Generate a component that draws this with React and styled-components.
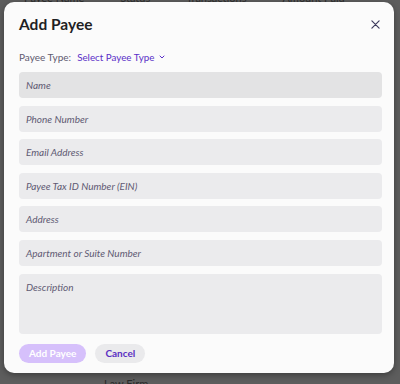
import styled, { createGlobalStyle } from 'styled-components';

const GlobalStyle = createGlobalStyle`
  html, body {
    margin: 0;
    padding: 0;
    background: #5d5d5d;
    font-family: Lato, 'Open Sans', sans-serif;
  }
`;

const Page = styled.div`
  position: relative;
  width: 400px;
  height: 384px;
  overflow: hidden;
  background: #5d5d5d;
`;

const BehindHeader = styled.div`
  display: flex;
  gap: 36px;
  padding: 0 0 0 24px;
  margin-top: -9px;
  font-size: 11px;
  color: #2e2e2e;
`;

const BehindCell = styled.div`
  position: absolute;
  left: 104px;
  top: 377px;
  font-size: 11px;
  color: #2a2a2a;
`;

const Modal = styled.div`
  position: absolute;
  left: 4px;
  top: 2px;
  width: 390px;
  height: 371px;
  box-sizing: border-box;
  background: #fbfbfb;
  border-radius: 10px;
  box-shadow: 0 2px 6px rgba(0, 0, 0, 0.35);
  padding: 11px 12px 0 15px;
  display: flex;
  flex-direction: column;
`;

const Header = styled.div`
  display: flex;
  align-items: center;
  justify-content: space-between;
  height: 22px;
`;

const Title = styled.h2`
  margin: 0;
  font-size: 15.5px;
  font-weight: 700;
  color: #1f1f24;
`;

const CloseButton = styled.button`
  border: 0;
  background: none;
  padding: 0;
  width: 14px;
  height: 14px;
  display: flex;
  align-items: center;
  justify-content: center;
  color: #3d3b5c;
`;

const TypeRow = styled.div`
  display: flex;
  align-items: center;
  margin-top: 16px;
  font-size: 10px;
  color: #5e5a70;
  gap: 6px;
`;

const TypeSelect = styled.span`
  display: flex;
  align-items: center;
  gap: 5px;
  color: #5a30c8;
  font-size: 9.8px;
`;

const Fields = styled.div`
  display: flex;
  flex-direction: column;
  gap: 7.6px;
  margin-top: 9px;
  width: 363px;
`;

const Field = styled.div`
  height: ${(p) => (p.$tall ? '60px' : '26px')};
  flex-shrink: 0;
  box-sizing: border-box;
  border-radius: 4px;
  background: ${(p) => (p.$active ? '#e3e3e4' : '#ebebed')};
  padding: ${(p) => (p.$tall ? '7px 7px' : '0 7px')};
  display: flex;
  align-items: ${(p) => (p.$tall ? 'flex-start' : 'center')};
  font-size: 10px;
  font-style: italic;
  color: #5f5a73;
`;

const Actions = styled.div`
  display: flex;
  gap: 9px;
  margin-top: 10px;
`;

const Button = styled.button`
  height: 19px;
  border: 0;
  border-radius: 10px;
  padding: 0 10px;
  font-family: inherit;
  font-size: 10px;
  font-weight: 700;
  background: ${(p) => (p.$primary ? '#d6c0fb' : '#eaeaec')};
  color: ${(p) => (p.$primary ? '#ffffff' : '#5a2fc2')};
`;

const fields = [
  'Name',
  'Phone Number',
  'Email Address',
  'Payee Tax ID Number (EIN)',
  'Address',
  'Apartment or Suite Number',
];

export default function App() {
  return (
    <Page>
      <GlobalStyle />
      <BehindHeader>
        <span>Payee Name</span>
        <span>Status</span>
        <span>Transactions</span>
        <span>Amount Paid</span>
      </BehindHeader>
      <BehindCell>Law Firm</BehindCell>
      <Modal>
        <Header>
          <Title>Add Payee</Title>
          <CloseButton aria-label="Close">
            <svg width="9" height="9" viewBox="0 0 10 10">
              <path d="M1 1 L9 9 M9 1 L1 9" stroke="currentColor" strokeWidth="1.3" strokeLinecap="round" />
            </svg>
          </CloseButton>
        </Header>
        <TypeRow>
          <span>Payee Type:</span>
          <TypeSelect>
            Select Payee Type
            <svg width="6" height="4" viewBox="0 0 6 4">
              <path d="M1 1 L3 3 L5 1" fill="none" stroke="currentColor" strokeWidth="1" strokeLinecap="round" />
            </svg>
          </TypeSelect>
        </TypeRow>
        <Fields>
          {fields.map((f, i) => (
            <Field key={f} $active={i === 0}>{f}</Field>
          ))}
          <Field $tall>Description</Field>
        </Fields>
        <Actions>
          <Button $primary>Add Payee</Button>
          <Button>Cancel</Button>
        </Actions>
      </Modal>
    </Page>
  );
}
